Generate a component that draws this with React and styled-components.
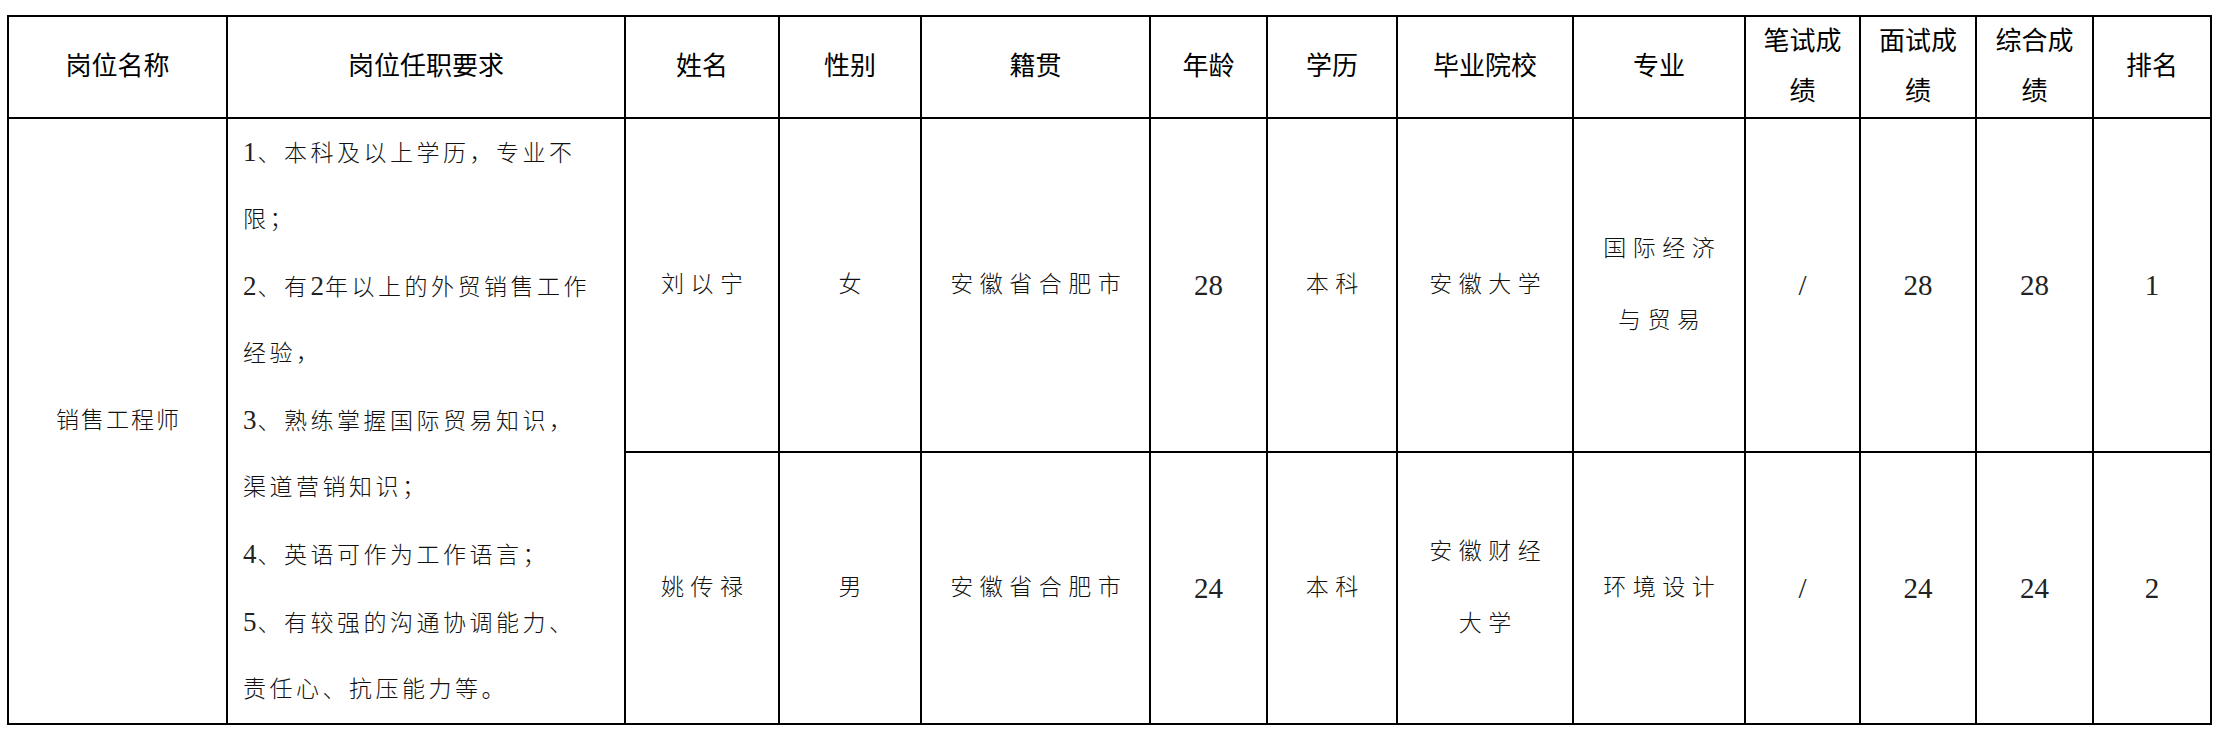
import React from "react";
import styled, { createGlobalStyle } from "styled-components";

const GlobalStyle = createGlobalStyle`
  html, body { margin: 0; padding: 0; background: #ffffff; }
  body { font-family: "Liberation Serif", "Noto Sans CJK SC", serif; }
`;

const Page = styled.div`
  padding: 15px 0 0 7px;
`;

const Table = styled.table`
  border-collapse: collapse;
  table-layout: fixed;
  width: 2205px;
  border: 2px solid #000;
  font-family: "Liberation Serif", "Noto Sans CJK SC", serif;
`;

const HeadRow = styled.tr`
  height: 102px;
`;

const BodyRow = styled.tr`
  height: ${(p) => p.$h}px;
`;

const Th = styled.th`
  border: 2px solid #000;
  padding: 0;
  font-size: 26px;
  font-weight: 400;
  line-height: 50px;
  color: #000;
  text-align: center;
  vertical-align: middle;
`;

const Td = styled.td`
  border: 2px solid #000;
  padding: 0 0 0 ${(p) => (p.$num ? 0 : p.$ls ?? 6.5)}px;
  font-size: ${(p) => (p.$num ? 29 : 23)}px;
  font-weight: 300;
  line-height: 72px;
  letter-spacing: ${(p) => (p.$num ? 0 : p.$ls ?? 6.5)}px;
  color: ${(p) => (p.$num ? "#222" : "#111")};
  text-align: center;
  vertical-align: middle;
`;

const ReqCell = styled.td`
  border: 2px solid #000;
  padding: 0 0 0 15px;
  font-size: 23px;
  font-weight: 300;
  letter-spacing: 3.5px;
  color: #111;
  text-align: left;
  vertical-align: middle;
`;

const ReqLine = styled.span`
  display: block;
  line-height: 66px;
  white-space: nowrap;
`;

const Digit = styled.span`
  font-size: 27px;
  letter-spacing: 1px;
  color: #222;
`;

const cols = [219, 398, 154, 142, 229, 117, 130, 176, 172, 115, 116, 117, 118];

const headers = [
  ["岗位名称"],
  ["岗位任职要求"],
  ["姓名"],
  ["性别"],
  ["籍贯"],
  ["年龄"],
  ["学历"],
  ["毕业院校"],
  ["专业"],
  ["笔试成", "绩"],
  ["面试成", "绩"],
  ["综合成", "绩"],
  ["排名"],
];

const reqLines = [
  ["1", "、本科及以上学历，专业不"],
  ["", "限；"],
  ["2", "、有", "2", "年以上的外贸销售工作"],
  ["", "经验，"],
  ["3", "、熟练掌握国际贸易知识，"],
  ["", "渠道营销知识；"],
  ["4", "、英语可作为工作语言；"],
  ["5", "、有较强的沟通协调能力、"],
  ["", "责任心、抗压能力等。"],
];

const people = [
  {
    h: 333,
    cells: [["刘以宁"], ["女"], ["安徽省合肥市"], ["28"], ["本科"], ["安徽大学"], ["国际经济", "与贸易"], ["/"], ["28"], ["28"], ["1"]],
  },
  {
    h: 271,
    cells: [["姚传禄"], ["男"], ["安徽省合肥市"], ["24"], ["本科"], ["安徽财经", "大学"], ["环境设计"], ["/"], ["24"], ["24"], ["2"]],
  },
];

const isNum = (c) => c.length === 1 && /^[0-9/]+$/.test(c[0]);

const Lines = ({ lines }) =>
  lines.map((l, i) => (
    <React.Fragment key={i}>
      {i > 0 && <br />}
      {l}
    </React.Fragment>
  ));

export default function App() {
  return (
    <>
      <GlobalStyle />
      <Page>
        <Table>
          <colgroup>
            {cols.map((w, i) => (
              <col key={i} style={{ width: w }} />
            ))}
          </colgroup>
          <thead>
            <HeadRow>
              {headers.map((h, i) => (
                <Th key={i}>
                  <Lines lines={h} />
                </Th>
              ))}
            </HeadRow>
          </thead>
          <tbody>
            {people.map((p, r) => (
              <BodyRow key={r} $h={p.h}>
                {r === 0 && (
                  <>
                    <Td rowSpan={2} $ls={2}>销售工程师</Td>
                    <ReqCell rowSpan={2}>
                      {reqLines.map((parts, i) => (
                        <ReqLine key={i}>
                          {parts.map((t, j) =>
                            /^[0-9]+$/.test(t) ? <Digit key={j}>{t}</Digit> : <React.Fragment key={j}>{t}</React.Fragment>
                          )}
                        </ReqLine>
                      ))}
                    </ReqCell>
                  </>
                )}
                {p.cells.map((c, i) => (
                  <Td key={i} $num={isNum(c)}>
                    <Lines lines={c} />
                  </Td>
                ))}
              </BodyRow>
            ))}
          </tbody>
        </Table>
      </Page>
    </>
  );
}
